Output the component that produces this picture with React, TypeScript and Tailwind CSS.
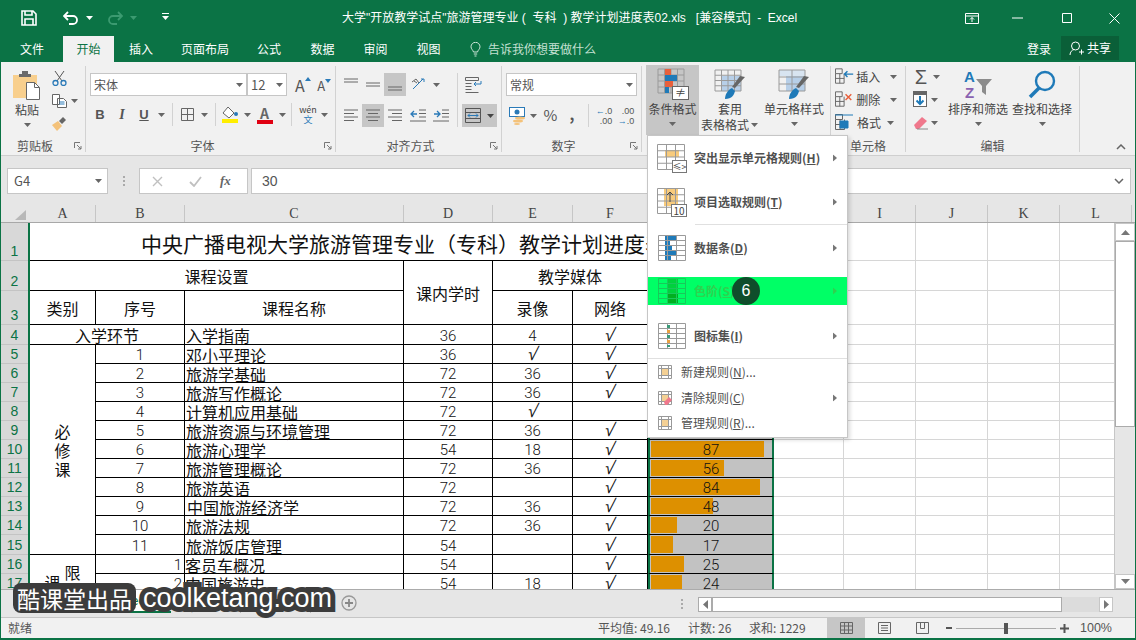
import * as React from "react";

function Caret({ w = "w-[12px]", color = "#666" }: { w?: string; color?: string }) {
  return (
    <span className={`flex shrink-0 items-center justify-center ${w}`}>
      <svg width="7" height="4" viewBox="0 0 7 4" className="shrink-0">
        <path d="M0 0h7L3.5 4z" fill={color} />
      </svg>
    </span>
  );
}

function Launcher() {
  return (
    <svg width="8" height="8" viewBox="0 0 8 8" className="absolute bottom-[2px] right-[3px]">
      <path d="M.5 6V.5H6" fill="none" stroke="#777" />
      <path d="M3 3l4 4M7 4v3H4" fill="none" stroke="#777" />
    </svg>
  );
}

function Group({ w, label, children, launcher = true }: { w: string; label: string; children: React.ReactNode; launcher?: boolean }) {
  return (
    <div className={`relative mt-1 flex h-[86px] shrink-0 flex-col border-r border-[#d2d2d2] ${w}`}>
      <div className="min-h-0 flex-1">{children}</div>
      <div className={`mb-[-1px] h-[15px] text-center text-[12px] leading-[15px] text-[#555] ${launcher ? "pr-[16px]" : ""}`}>{label}</div>
      {launcher ? <Launcher /> : null}
    </div>
  );
}

function Tool({ w = "w-[22px]", active, children }: { w?: string; active?: boolean; children: React.ReactNode }) {
  return (
    <span className={`flex h-[23px] shrink-0 items-center justify-center ${w} ${active ? "bg-[#c6c6c6]" : ""}`}>{children}</span>
  );
}

function Sep({ w }: { w: string }) {
  return (
    <span className={`flex h-[23px] shrink-0 justify-center ${w}`}>
      <span className="w-px bg-[#d2d2d2]" />
    </span>
  );
}

function Lines({ kind }: { kind: "top" | "mid" | "bottom" | "left" | "center" | "right" }) {
  const d = {
    top: "M1 2h14M1 5h14",
    mid: "M1 6h14M1 9h14",
    bottom: "M1 10h14M1 13h14",
    left: "M1 2h14M1 5.5h10M1 9h14M1 12.5h10",
    center: "M1 2h14M3 5.5h10M1 9h14M3 12.5h10",
    right: "M1 2h14M5 5.5h10M1 9h14M5 12.5h10",
  }[kind];
  return (
    <svg width="16" height="15" viewBox="0 0 16 15">
      <path d={d} stroke="#666" fill="none" />
    </svg>
  );
}

function Grid({ x = 1, y = 1, w = 28, h = 28, cols = 3, rows = 4, color = "#9a9a9a" }: { x?: number; y?: number; w?: number; h?: number; cols?: number; rows?: number; color?: string }) {
  const parts: string[] = [`M${x} ${y}h${w}v${h}h-${w}z`];
  for (let i = 1; i < cols; i++) parts.push(`M${x + (w * i) / cols} ${y}v${h}`);
  for (let i = 1; i < rows; i++) parts.push(`M${x} ${y + (h * i) / rows}h${w}`);
  return <path d={parts.join("")} fill="none" stroke={color} />;
}

function SelectBox({ w, text, small }: { w: string; text: string; small?: boolean }) {
  return (
    <div className={`flex h-[23px] shrink-0 items-center justify-between border border-[#c6c6c6] bg-white pl-[3px] ${w}`}>
      <span className={`text-[#555] ${small ? "text-[13px]" : "text-[12px]"}`}>{text}</span>
      <Caret w="w-[14px]" />
    </div>
  );
}

function TitleBar() {
  return (
    <div className="relative flex h-[36px] items-center text-white">
      <svg width="16" height="16" viewBox="0 0 16 16" className="ml-[20px]">
        <path d="M1 1h11l3 3v11H1z" fill="none" stroke="#fff" strokeWidth="1.6" />
        <path d="M4 1v4h7V1M4 15V9h8v6" fill="none" stroke="#fff" strokeWidth="1.6" />
      </svg>
      <svg width="16" height="14" viewBox="0 0 16 14" className="ml-[26px]">
        <path d="M1 5h9a4 4 0 010 8H6M5 1L1 5l4 4" fill="none" stroke="#fff" strokeWidth="1.8" />
      </svg>
      <Caret w="w-[12px] ml-[4px]" color="#fff" />
      <svg width="16" height="14" viewBox="0 0 16 14" className="ml-[12px]">
        <path d="M15 5H6a4 4 0 000 8h4M11 1l4 4-4 4" fill="none" stroke="#3b9a70" strokeWidth="1.8" />
      </svg>
      <Caret w="w-[12px] ml-[4px]" color="#3b9a70" />
      <svg width="7" height="8" viewBox="0 0 7 8" className="ml-[23px] mb-[3px]">
        <path d="M0 0h7v1H0zM0 3h7L3.5 7z" fill="#fff" />
      </svg>
      <div className="absolute left-[341px] top-[10px] whitespace-nowrap [font-family:'Liberation_Sans','Noto_Sans_CJK_SC',sans-serif] text-[12px] leading-[17px]">大学"开放教学试点"旅游管理专业&nbsp;(&nbsp; 专科&nbsp; )&nbsp;教学计划进度表02.xls&nbsp;&nbsp; [兼容模式]&nbsp; -&nbsp; Excel</div>
      <div className="ml-auto flex items-center pr-[15px]">
        <svg width="14" height="11" viewBox="0 0 14 11" className="mr-[33px]">
          <path d="M.5.5h13v10H.5zM.5 3h13M7 9V4.5M5 6.5l2-2 2 2" fill="none" stroke="#fff" />
        </svg>
        <svg width="11" height="2" viewBox="0 0 11 2" className="mr-[39px]"><path d="M0 1h11" stroke="#fff" /></svg>
        <svg width="10" height="10" viewBox="0 0 10 10" className="mr-[37px]"><path d="M.5.5h9v9h-9z" fill="none" stroke="#fff" /></svg>
        <svg width="11" height="11" viewBox="0 0 11 11"><path d="M.5.5l10 10M10.5.5l-10 10" stroke="#fff" /></svg>
      </div>
    </div>
  );
}

function TabsRow() {
  const tabs: [string, string][] = [
    ["插入", "w-[54px]"],
    ["页面布局", "w-[74px]"],
    ["公式", "w-[54px]"],
    ["数据", "w-[53px]"],
    ["审阅", "w-[53px]"],
    ["视图", "w-[53px]"],
  ];
  return (
    <div className="flex h-[26px] text-[12px] text-white">
      <span className="flex w-[62px] items-center justify-center">文件</span>
      <span className="flex w-[51px] items-center justify-center bg-[#f1f1f1] text-[#0b7345]">开始</span>
      {tabs.map(([t, w]) => (
        <span key={t} className={`flex items-center justify-center ${w}`}>{t}</span>
      ))}
      <svg width="11" height="15" viewBox="0 0 11 15" className="ml-[15px] mt-[6px]">
        <path d="M3.5 10C3 8 1 7 1 4.8a4.5 4.5 0 019 0C10 7 8 8 7.5 10zM3.8 12h3.4M4.5 14h2" fill="none" stroke="#cfe6da" />
      </svg>
      <span className="ml-[7px] flex items-center text-[#c4e0d2]">告诉我你想要做什么</span>
      <span className="ml-auto flex items-center">登录</span>
      <span className="ml-[10px] mr-[16px] flex h-[24px] w-[58px] items-center justify-center gap-[3px] bg-[#0a5f38]">
        <svg width="15" height="15" viewBox="0 0 15 15">
          <circle cx="6.5" cy="5" r="4" fill="none" stroke="#fff" />
          <path d="M1 14c0-3 2-5 4-5.5M10 11h5M12.5 8.5v5" fill="none" stroke="#fff" />
        </svg>
        共享
      </span>
    </div>
  );
}

function Clipboard() {
  return (
    <Group w="w-[85px]" label="剪贴板">
      <div className="flex">
        <div className="ml-[8px] flex w-[36px] flex-col items-center">
          <svg width="30" height="31" viewBox="0 0 30 31" className="mt-[3px]">
            <rect x="1" y="6" width="24" height="23" fill="#f8cf8d" />
            <path d="M7 5h3V2h6v3h3v3H7z" fill="#6b6b6b" />
            <path d="M14.5 13.5h8l5 5v12h-13z" fill="#fff" stroke="#666" />
            <path d="M22.5 13.5v5h5" fill="none" stroke="#666" />
          </svg>
          <span className="mt-[2px] text-[12px] leading-[16px] text-[#444]">粘贴</span>
          <Caret w="h-[14px] w-[12px]" />
        </div>
        <div className="ml-[5px] flex flex-col items-start">
          <Tool w="w-[18px]">
            <svg width="15" height="16" viewBox="0 0 15 16">
              <path d="M3 1l7 10M12 1L5 11" stroke="#555" fill="none" />
              <circle cx="3.5" cy="13" r="2.5" fill="none" stroke="#2a7ab8" strokeWidth="1.3" />
              <circle cx="11.5" cy="13" r="2.5" fill="none" stroke="#2a7ab8" strokeWidth="1.3" />
            </svg>
          </Tool>
          <div className="flex">
            <Tool w="w-[18px]">
              <svg width="15" height="14" viewBox="0 0 15 14">
                <path d="M.5.5h7v10h-7zM5.5 4.5h6l3 3v6h-9z" fill="#fff" stroke="#666" />
                <path d="M7.5 8h5M7.5 10h5" stroke="#2a7ab8" />
              </svg>
            </Tool>
            <Caret />
          </div>
          <Tool w="w-[18px]">
            <svg width="16" height="16" viewBox="0 0 16 16">
              <path d="M1 9l6-4 4 5-5 5z" fill="#f4c27a" />
              <path d="M8 5l4-4 3 3-4 4z" fill="#666" />
            </svg>
          </Tool>
        </div>
      </div>
    </Group>
  );
}

function FontGroup() {
  return (
    <Group w="w-[250px]" label="字体">
      <div className="flex pl-[4px] pt-[7px]">
        <SelectBox w="w-[157px]" text="宋体" />
        <SelectBox w="w-[40px]" text="12" small />
        <span className="relative ml-[5px] flex w-[22px] items-end justify-center text-[16px] leading-[21px] text-[#555]">
          A<svg width="6" height="4" viewBox="0 0 6 4" className="mb-[15px]"><path d="M0 4h6L3 0z" fill="#2a7ab8" /></svg>
        </span>
        <span className="flex w-[22px] items-end justify-center text-[13px] leading-[20px] text-[#555]">
          A<svg width="6" height="4" viewBox="0 0 6 4" className="mb-[13px]"><path d="M0 0h6L3 4z" fill="#2a7ab8" /></svg>
        </span>
      </div>
      <div className="mt-[7px] flex pl-[3px] text-[#555]">
        <Tool><b className="[font-family:'Liberation_Sans'] text-[13px]">B</b></Tool>
        <Tool><i className="[font-family:'Liberation_Serif'] text-[14px] font-bold">I</i></Tool>
        <Tool><u className="[font-family:'Liberation_Sans'] text-[13px] font-bold">U</u></Tool>
        <Caret />
        <Sep w="w-[11px]" />
        <Tool w="w-[18px]">
          <svg width="13" height="13" viewBox="0 0 13 13"><path d="M.5.5h12v12H.5zM6.5.5v12M.5 6.5h12" fill="none" stroke="#666" /></svg>
        </Tool>
        <Caret w="w-[16px]" />
        <Sep w="w-[6px]" />
        <Tool w="w-[25px]">
          <svg width="17" height="18" viewBox="0 0 17 18">
            <path d="M6 1l6 6-5 5-6-5z" fill="#fff" stroke="#666" />
            <circle cx="14" cy="8" r="2" fill="#2a7ab8" />
            <rect x="0" y="13" width="16" height="4" fill="#ffee00" />
          </svg>
        </Tool>
        <Caret w="w-[8px]" />
        <Tool w="w-[27px]">
          <span className="relative flex h-[18px] w-[16px] justify-center text-[14px] font-bold leading-[14px] text-[#666]">
            A<span className="absolute bottom-0 left-0 h-[4px] w-[16px] bg-[#e00012]" />
          </span>
        </Tool>
        <Caret w="w-[8px]" />
        <Sep w="w-[10px]" />
        <Tool w="w-[24px]">
          <span className="flex flex-col items-center text-[9px] leading-[10px] text-[#444]">wén<span className="text-[#2a7ab8]">文</span></span>
        </Tool>
        <Caret w="w-[8px]" />
      </div>
    </Group>
  );
}

function AlignGroup() {
  return (
    <Group w="w-[166px]" label="对齐方式">
      <div className="flex pl-[4px] pt-[7px]">
        <div className="w-[117px]">
          <div className="flex">
            <Tool><Lines kind="top" /></Tool>
            <Tool><Lines kind="mid" /></Tool>
            <Tool active><Lines kind="bottom" /></Tool>
            <Tool w="w-[26px]">
              <svg width="17" height="15" viewBox="0 0 17 15">
                <path d="M2 12L12 2M10 2h3v3" fill="none" stroke="#2a7ab8" />
                <path d="M1 5l4-3 3 4M3 4l3 2" fill="none" stroke="#666" />
              </svg>
            </Tool>
            <Caret w="w-[8px]" />
          </div>
          <div className="mt-[8px] flex">
            <Tool><Lines kind="left" /></Tool>
            <Tool active><Lines kind="center" /></Tool>
            <Tool><Lines kind="right" /></Tool>
            <Tool w="w-[24px]">
              <svg width="16" height="13" viewBox="0 0 16 13"><path d="M9 1h7M9 4.5h7M9 8h7M0 12h16" stroke="#666" fill="none" /><path d="M7 5H1M4 2L1 5l3 3" stroke="#2a7ab8" fill="none" strokeWidth="1.3" /></svg>
            </Tool>
            <Tool>
              <svg width="16" height="13" viewBox="0 0 16 13"><path d="M9 1h7M9 4.5h7M9 8h7M0 12h16" stroke="#666" fill="none" /><path d="M1 5h6M4 2l3 3-3 3" stroke="#2a7ab8" fill="none" strokeWidth="1.3" /></svg>
            </Tool>
          </div>
        </div>
        <span className="h-[54px] w-px bg-[#d2d2d2]" />
        <div className="ml-[4px] flex flex-col">
          <Tool w="w-[22px]">
            <svg width="17" height="16" viewBox="0 0 17 16"><path d="M.5.5h13v3H.5zM.5 6.5h6M.5 9.5h6M.5 12.5h6M.5 15.5h13" stroke="#666" fill="none" /><path d="M16 7H9M11 5L9 7l2 2M16 4v3" stroke="#2a7ab8" fill="none" /></svg>
          </Tool>
          <div className="mt-[8px] flex w-[35px] bg-[#c6c6c6]">
            <Tool w="w-[22px]">
              <svg width="16" height="15" viewBox="0 0 16 15"><path d="M.5.5h15v14H.5zM.5 4.5h15M.5 10.5h15" stroke="#555" fill="none" /><path d="M3 7.5h10M5 5.5l-2 2 2 2M11 5.5l2 2-2 2" stroke="#2a7ab8" fill="none" /></svg>
            </Tool>
            <Caret w="w-[13px]" color="#444" />
          </div>
        </div>
      </div>
    </Group>
  );
}

function NumberGroup() {
  return (
    <Group w="w-[140px]" label="数字">
      <div className="pl-[4px] pt-[7px]">
        <SelectBox w="w-[131px]" text="常规" />
        <div className="mt-[8px] flex items-center text-[#555]">
          <Tool>
            <svg width="17" height="18" viewBox="0 0 17 18">
              <rect x=".5" y=".5" width="15" height="9" fill="#fff" stroke="#2a7ab8" />
              <circle cx="8" cy="5" r="2.5" fill="#2a7ab8" />
              <ellipse cx="11" cy="11" rx="5" ry="1.5" fill="#f4c27a" />
              <ellipse cx="9" cy="14" rx="5" ry="1.5" fill="#f4c27a" />
              <ellipse cx="8" cy="17" rx="3" ry="1" fill="#f4c27a" />
            </svg>
          </Tool>
          <Caret w="w-[10px]" />
          <Tool w="w-[25px]"><span className="text-[15px]">%</span></Tool>
          <Tool w="w-[18px]"><span className="mb-[3px] text-[15px] font-bold">,</span></Tool>
          <Sep w="w-[14px]" />
          <Tool w="w-[18px]">
            <span className="text-right [font-family:'Liberation_Sans'] text-[9px] leading-[10px]"><span className="text-[#2a7ab8]">←</span>.0<br />.00</span>
          </Tool>
          <Tool w="w-[26px]">
            <span className="text-right [font-family:'Liberation_Sans'] text-[9px] leading-[10px]">.00<br /><span className="text-[#2a7ab8]">→</span>.0</span>
          </Tool>
        </div>
      </div>
    </Group>
  );
}

function BigButton({ w, children, lines, active, caretInline }: { w: string; children: React.ReactNode; lines: string[]; active?: boolean; caretInline?: boolean }) {
  return (
    <div className={`flex h-[70px] shrink-0 flex-col items-center ${w} ${active ? "bg-[#c6c6c6]" : ""}`}>
      <div className="flex h-[36px] w-full items-end justify-center pb-[1px]">{children}</div>
      {lines.map((l, i) => (
        <div key={l} className="flex whitespace-nowrap text-[12px] leading-[16px] text-[#444]">
          {l}
          {caretInline && i === lines.length - 1 ? <Caret w="w-[10px]" /> : null}
        </div>
      ))}
      {caretInline ? null : <Caret w="h-[14px] w-[12px]" />}
    </div>
  );
}

function StylesGroup() {
  return (
    <Group w="w-[189px]" label="样式" launcher={false}>
      <div className="-mt-px flex pl-[4px]">
        <BigButton w="w-[53px]" lines={["条件格式"]} active>
          <svg width="32" height="32" viewBox="0 0 32 32">
            <Grid x={1} y={1} w={26} h={24} cols={4} rows={4} />
            <rect x="8" y="1" width="6" height="6" fill="#e8603c" />
            <rect x="8" y="7" width="12" height="6" fill="#1f7ab8" />
            <rect x="8" y="13" width="8" height="6" fill="#e8603c" />
            <rect x="8" y="19" width="4" height="6" fill="#1f7ab8" />
            <rect x="15.5" y="18.5" width="16" height="13" fill="#fff" stroke="#666" />
            <text x="23.5" y="29" textAnchor="middle" fontSize="11" fill="#444">≠</text>
          </svg>
        </BigButton>
        <BigButton w="w-[62px]" lines={["套用", "表格格式"]} caretInline>
          <svg width="32" height="31" viewBox="0 0 32 31">
            <rect x="8" y="7" width="19" height="15" fill="#b7cfe8" />
            <Grid x={1} y={1} w={26} h={21} cols={4} rows={4} />
            <path d="M31 8L21 19l-3-1 8-11z" fill="#666" />
            <path d="M11 30c0-5 3-9 7-11l3 3c-1 4-3 8-10 8z" fill="#1f7ab8" />
          </svg>
        </BigButton>
        <BigButton w="w-[66px]" lines={["单元格样式"]}>
          <svg width="32" height="31" viewBox="0 0 32 31">
            <rect x="1" y="1" width="26" height="6" fill="#d8e4f0" />
            <rect x="8" y="7" width="19" height="15" fill="#b7cfe8" />
            <Grid x={1} y={1} w={26} h={21} cols={2} rows={3} />
            <path d="M31 8L21 19l-3-1 8-11z" fill="#666" />
            <path d="M11 30c0-5 3-9 7-11l3 3c-1 4-3 8-10 8z" fill="#1f7ab8" />
          </svg>
        </BigButton>
      </div>
    </Group>
  );
}

function CellRow({ label, accent, mini }: { label: string; accent: React.ReactNode; mini?: boolean }) {
  return (
    <div className="flex h-[23px] items-center">
      <svg width="20" height="17" viewBox="0 0 20 17" className="ml-[4px] mr-[2px]">
        <path d="M.5.5h7v5h-7zM.5 5.5v10h9v-10M.5 10.5h9M5 5.5v10" fill="none" stroke="#666" />
        {accent}
      </svg>
      <span className="w-[27px] text-[12px] text-[#444]">{label}</span>
      <Caret w={mini ? "w-[12px]" : "w-[23px]"} />
    </div>
  );
}

function CellsGroup() {
  return (
    <Group w="w-[75px]" label="单元格" launcher={false}>
      <div className="-mt-px">
        <CellRow label="插入" accent={<path d="M10 6h9M13 3L10 6l3 3" fill="none" stroke="#1f7ab8" strokeWidth="1.5" />} />
        <CellRow label="删除" accent={<path d="M11 3l6 6M17 3l-6 6" stroke="#e8603c" strokeWidth="1.5" />} />
        <CellRow label="格式" mini accent={<path d="M0 1h18M5 7h8v7H5z" stroke="#1f7ab8" fill="#1f7ab8" />} />
      </div>
    </Group>
  );
}

function EditGroup() {
  return (
    <Group w="w-[174px]" label="编辑" launcher={false}>
      <div className="-mt-px flex">
        <div className="w-[41px]">
          <div className="flex h-[23px] items-center pl-[6px]">
            <span className="w-[18px] text-center [font-family:'Liberation_Sans'] text-[20px] leading-[20px] text-[#555]">Σ</span>
            <Caret />
          </div>
          <div className="flex h-[23px] items-center pl-[7px]">
            <svg width="16" height="17" viewBox="0 0 16 17">
              <rect x=".5" y=".5" width="13" height="15" fill="#fff" stroke="#666" />
              <rect x="0" y="0" width="14" height="4" fill="#666" />
              <path d="M7 5v8M3.5 9.5L7 13l3.5-3.5" stroke="#1f7ab8" strokeWidth="2" fill="none" />
            </svg>
            <Caret w="w-[10px]" />
          </div>
          <div className="flex h-[23px] items-center pl-[7px]">
            <svg width="16" height="15" viewBox="0 0 16 15">
              <path d="M1 10l8-8 5 4-8 8H3z" fill="#f0788c" />
              <path d="M4 14h11" stroke="#888" />
            </svg>
            <Caret w="w-[10px]" />
          </div>
        </div>
        <BigButton w="w-[62px]" lines={["排序和筛选"]}>
          <svg width="32" height="32" viewBox="0 0 32 32">
            <text x="2" y="14" fontSize="15" fontWeight="700" fill="#1f7ab8" fontFamily="Liberation Sans">A</text>
            <text x="3" y="30" fontSize="15" fontWeight="700" fill="#8a62b0" fontFamily="Liberation Sans">Z</text>
            <path d="M14 11h16l-6 7v9l-4-3v-6z" fill="#8c8c8c" />
          </svg>
        </BigButton>
        <BigButton w="w-[66px]" lines={["查找和选择"]}>
          <svg width="28" height="30" viewBox="0 0 28 30">
            <circle cx="17" cy="11" r="9" fill="none" stroke="#1f7ab8" strokeWidth="2.4" />
            <path d="M11 18L2 27" stroke="#1f7ab8" strokeWidth="3.5" />
          </svg>
        </BigButton>
      </div>
    </Group>
  );
}

function Ribbon() {
  return (
    <div className="flex h-[94px] border-b border-[#cfcfcf] bg-[#f1f1f1]">
      <Clipboard />
      <FontGroup />
      <AlignGroup />
      <NumberGroup />
      <StylesGroup />
      <CellsGroup />
      <EditGroup />
      <div className="flex flex-1 items-end justify-end pb-[5px] pr-[9px]">
        <svg width="10" height="6" viewBox="0 0 10 6"><path d="M1 5l4-4 4 4" fill="none" stroke="#666" strokeWidth="1.5" /></svg>
      </div>
    </div>
  );
}

function FormulaBar() {
  return (
    <div className="flex h-[49px] bg-[#e6e6e6] pl-[6px] pt-[12px]">
      <div className="flex h-[26px] w-[101px] items-center justify-between border border-[#c6c6c6] bg-white pl-[6px] pr-[3px] text-[13px] text-[#555]">
        G4
        <Caret w="w-[12px]" />
      </div>
      <div className="flex h-[26px] w-[31px] flex-col items-center justify-center gap-[2px]">
        <span className="size-[2px] bg-[#aaa]" />
        <span className="size-[2px] bg-[#aaa]" />
        <span className="size-[2px] bg-[#aaa]" />
      </div>
      <div className="flex h-[26px] w-[109px] items-center border border-[#c6c6c6] bg-white">
        <svg width="11" height="11" viewBox="0 0 11 11" className="ml-[12px]"><path d="M1 1l9 9M10 1l-9 9" stroke="#c0c0c0" strokeWidth="1.4" /></svg>
        <svg width="13" height="11" viewBox="0 0 13 11" className="ml-[26px]"><path d="M1 6l4 4 7-9" fill="none" stroke="#c0c0c0" strokeWidth="1.8" /></svg>
        <i className="ml-[18px] [font-family:'Liberation_Serif'] text-[13px] font-bold text-[#666]">fx</i>
      </div>
      <div className="ml-[3px] flex h-[26px] w-[880px] items-center justify-between border border-[#c6c6c6] bg-white pl-[10px] pr-[6px] [font-family:'Liberation_Sans'] text-[14px] text-[#555]">
        30
        <svg width="10" height="6" viewBox="0 0 10 6"><path d="M1 1l4 4 4-4" fill="none" stroke="#666" strokeWidth="1.5" /></svg>
      </div>
    </div>
  );
}

const colHeaders: [string, string][] = [
  ["A", "w-[66px]"],
  ["B", "w-[89px]"],
  ["C", "w-[219px]"],
  ["D", "w-[89px]"],
  ["E", "w-[80px]"],
  ["F", "w-[75px]"],
  ["G", "w-[126px]"],
  ["H", "w-[70px]"],
  ["I", "w-[72px]"],
  ["J", "w-[72px]"],
  ["K", "w-[72px]"],
  ["L", "w-[72px]"],
];

function ColumnHeaders() {
  return (
    <div className="flex h-[18px] overflow-hidden border-b border-[#a8a8a8] bg-[#e6e6e6]">
      <div className="relative w-[29px] shrink-0">
        <svg width="11" height="10" viewBox="0 0 11 10" className="absolute left-[14px] top-[5px]"><path d="M11 0v10H0z" fill="#b8b8b8" /></svg>
      </div>
      {colHeaders.map(([c, w]) => (
        <div key={c} className={`flex shrink-0 items-center justify-center border-r border-[#c6c6c6] [font-family:'Liberation_Serif'] text-[14px] text-[#444] ${w}`}>{c}</div>
      ))}
    </div>
  );
}

const rowHeights: [number, string][] = [
  [1, "h-[38px]"], [2, "h-[30px]"], [3, "h-[34px]"], [4, "h-[20px]"], [5, "h-[19px]"], [6, "h-[19px]"],
  [7, "h-[19px]"], [8, "h-[19px]"], [9, "h-[19px]"], [10, "h-[19px]"], [11, "h-[19px]"], [12, "h-[19px]"],
  [13, "h-[19px]"], [14, "h-[19px]"], [15, "h-[20px]"], [16, "h-[19px]"], [17, "h-[19px]"],
];

function Cell({ className = "", align = "items-end", justify = "justify-center", children, num }: { className?: string; align?: string; justify?: string; children?: React.ReactNode; num?: boolean }) {
  return (
    <div className={`flex whitespace-nowrap border-b border-r border-black leading-[16px] text-[#111] ${align} ${justify} ${num ? "[font-family:'Roboto'] text-[15px] font-light" : "text-[16px]"} ${className}`}>
      {children}
    </div>
  );
}

function Check() {
  return <span className="mb-[1px] -skew-x-12 [font-family:'Liberation_Sans'] text-[18px] font-normal leading-[16px]">√</span>;
}

function Blanks() {
  return (
    <>
      <div className="border-b border-r border-[#d6d6d6]" />
      <div className="border-b border-r border-[#d6d6d6]" />
      <div className="border-b border-r border-[#d6d6d6]" />
      <div className="border-b border-r border-[#d6d6d6]" />
      <div className="border-b border-r border-[#d6d6d6]" />
    </>
  );
}

function Bar({ value }: { value?: number }) {
  return (
    <div className="relative flex items-end justify-center border-x-2 border-b border-[#0b7345] border-b-black bg-[#c2c2c2] [font-family:'Roboto'] text-[15px] font-light leading-[16px] text-[#111]">
      {value !== undefined ? <div className="absolute bottom-[1px] left-[1px] top-[1px] bg-[#dd9000]" style={{ width: value * 1.3 }} /> : null}
      <span className="relative">{value}</span>
    </div>
  );
}

const courses: { no: number; name: string; hours: string; video: string; net: boolean; val: number; shift?: boolean }[] = [
  { no: 1, name: "邓小平理论", hours: "36", video: "√", net: true, val: 30 },
  { no: 2, name: "旅游学基础", hours: "72", video: "36", net: true, val: 40 },
  { no: 3, name: "旅游写作概论", hours: "72", video: "36", net: true, val: 50 },
  { no: 4, name: "计算机应用基础", hours: "72", video: "√", net: false, val: 60 },
  { no: 5, name: "旅游资源与环境管理", hours: "72", video: "36", net: true, val: 68 },
  { no: 6, name: "旅游心理学", hours: "54", video: "18", net: true, val: 87 },
  { no: 7, name: "旅游管理概论", hours: "72", video: "36", net: true, val: 56 },
  { no: 8, name: "旅游英语", hours: "72", video: "", net: true, val: 84 },
  { no: 9, name: "中国旅游经济学", hours: "72", video: "36", net: true, val: 48, shift: true },
  { no: 10, name: "旅游法规", hours: "72", video: "36", net: true, val: 20 },
  { no: 11, name: "旅游饭店管理", hours: "54", video: "", net: true, val: 17 },
];

function SheetGrid() {
  return (
    <div className="grid grid-cols-[66px_89px_219px_89px_80px_75px_126px_70px_72px_72px_72px_72px] grid-rows-[38px_30px_34px_20px_19px_19px_19px_19px_19px_19px_19px_19px_19px_19px_20px_19px_19px]">
      <Cell className="col-span-7 pl-[4px] text-[21px]"><span className="mb-[3px] leading-[27px]">中央广播电视大学旅游管理专业（专科）教学计划进度表</span></Cell>
      <Blanks />

      <Cell className="col-span-3" align="items-center">课程设置</Cell>
      <Cell className="row-span-2" align="items-center">课内学时</Cell>
      <Cell className="col-span-2" align="items-center">教学媒体</Cell>
      <Bar />
      <Blanks />

      <Cell align="items-center">类别</Cell>
      <Cell align="items-center">序号</Cell>
      <Cell align="items-center">课程名称</Cell>
      <Cell align="items-center">录像</Cell>
      <Cell align="items-center">网络</Cell>
      <Bar />
      <Blanks />

      <Cell className="col-span-2" align="items-center">入学环节</Cell>
      <Cell justify="justify-start" align="items-center" className="pl-px">入学指南</Cell>
      <Cell num>36</Cell>
      <Cell num>4</Cell>
      <Cell><Check /></Cell>
      <Bar value={30} />
      <Blanks />

      {courses.map((c, i) => (
        <React.Fragment key={c.no}>
          {i === 0 ? (
            <Cell className="row-span-11 flex-col pb-[75px]" align="items-center" justify="justify-end">
              <span className="leading-[19px]">必</span>
              <span className="leading-[19px]">修</span>
              <span className="leading-[19px]">课</span>
            </Cell>
          ) : null}
          <Cell num>{c.no}</Cell>
          <Cell justify="justify-start" className={c.shift ? "pl-[2px]" : "pl-px"}>{c.name}</Cell>
          <Cell num>{c.hours}</Cell>
          <Cell num>{c.video === "√" ? <Check /> : c.video}</Cell>
          <Cell>{c.net ? <Check /> : null}</Cell>
          <Bar value={c.val} />
          <Blanks />
        </React.Fragment>
      ))}

      <Cell className="row-span-2 gap-[4px] overflow-hidden" align="items-start">
        <span className="mt-[19px]">课</span>
        <span className="mt-[9px]">限</span>
      </Cell>
      <Cell num justify="justify-end" className="pr-[2px]">1</Cell>
      <Cell justify="justify-start">客员车概况</Cell>
      <Cell num>54</Cell>
      <Cell />
      <Cell><Check /></Cell>
      <Bar value={25} />
      <Blanks />

      <Cell num justify="justify-end" className="pr-[2px]">2</Cell>
      <Cell justify="justify-start">中国旅游史</Cell>
      <Cell num>54</Cell>
      <Cell num>18</Cell>
      <Cell><Check /></Cell>
      <Bar value={24} />
      <Blanks />
    </div>
  );
}

function Sheet() {
  return (
    <div className="flex h-[366px] overflow-hidden">
      <div className="w-[29px] shrink-0 border-r-2 border-[#0b7345] bg-[#d8d8d8]">
        {rowHeights.map(([n, h]) => (
          <div key={n} className={`flex items-end justify-center border-b border-[#c4c4c4] [font-family:'Liberation_Sans'] text-[14px] leading-[17px] text-[#0b7345] ${h}`}>{n}</div>
        ))}
      </div>
      <div className="w-[1084px] shrink-0 overflow-hidden bg-white">
        <SheetGrid />
      </div>
      <div className="flex w-[21px] shrink-0 flex-col border-l border-[#c6c6c6] bg-[#e6e6e6]">
        <div className="flex h-[18px] items-center justify-center border border-[#c6c6c6] bg-white">
          <svg width="9" height="5" viewBox="0 0 9 5"><path d="M0 5h9L4.5 0z" fill="#777" /></svg>
        </div>
        <div className="h-[186px] border border-[#ababab] bg-white" />
        <div className="flex-1" />
        <div className="flex h-[15px] items-center justify-center border border-[#c6c6c6] bg-white">
          <svg width="9" height="5" viewBox="0 0 9 5"><path d="M0 0h9L4.5 5z" fill="#777" /></svg>
        </div>
      </div>
    </div>
  );
}

function SheetTabs() {
  return (
    <div className="flex h-[28px] border-t border-[#ababab] bg-[#e6e6e6]">
      <div className="ml-[100px] flex h-[23px] w-[70px] items-center justify-center border-b-2 border-[#0b7345] bg-white [font-family:'Liberation_Sans'] text-[13px] text-[#0b7345]">Sheet1</div>
      <div className="flex h-[23px] w-[70px] items-center justify-center border-r border-[#bbb] [font-family:'Liberation_Sans'] text-[13px] text-[#444]">Sheet2</div>
      <div className="flex h-[23px] w-[70px] items-center justify-center border-r border-[#bbb] [font-family:'Liberation_Sans'] text-[13px] text-[#444]">Sheet3</div>
      <svg width="16" height="16" viewBox="0 0 16 16" className="ml-[30px] mt-[5px]">
        <circle cx="8" cy="8" r="7" fill="none" stroke="#999" strokeWidth="1.3" />
        <path d="M8 4v8M4 8h8" stroke="#888" strokeWidth="1.8" />
      </svg>
      <div className="ml-[324px] mt-[9px] flex h-[10px] flex-col gap-[2px]">
        <span className="size-[2px] bg-[#aaa]" />
        <span className="size-[2px] bg-[#aaa]" />
        <span className="size-[2px] bg-[#aaa]" />
      </div>
      <div className="ml-[15px] mt-[7px] flex h-[15px] w-[415px] bg-[#dcdcdc]">
        <div className="flex w-[14px] items-center justify-center border border-[#ababab] bg-white">
          <svg width="5" height="9" viewBox="0 0 5 9"><path d="M5 0v9L0 4.5z" fill="#777" /></svg>
        </div>
        <div className="w-[350px] border border-[#ababab] bg-white" />
        <div className="flex-1" />
        <div className="flex w-[14px] items-center justify-center border border-[#c6c6c6] bg-white">
          <svg width="5" height="9" viewBox="0 0 5 9"><path d="M0 0v9l5-4.5z" fill="#777" /></svg>
        </div>
      </div>
    </div>
  );
}

function StatusBar() {
  return (
    <div className="flex h-[21px] items-center border-t border-[#c6c6c6] bg-[#f1f1f1] text-[12px] text-[#555]">
      <span className="ml-[7px]">就绪</span>
      <span className="ml-[566px] w-[90px] whitespace-nowrap">平均值: 49.16</span>
      <span className="w-[61px] whitespace-nowrap">计数: 26</span>
      <span className="w-[78px] whitespace-nowrap">求和: 1229</span>
      <span className="flex h-[21px] w-[38px] items-center justify-center bg-[#c6c6c6]">
        <svg width="13" height="12" viewBox="0 0 13 12"><path d="M.5.5h12v11H.5zM4.5.5v11M8.5.5v11M.5 4h12M.5 8h12" fill="none" stroke="#666" /></svg>
      </span>
      <span className="flex w-[38px] items-center justify-center">
        <svg width="13" height="12" viewBox="0 0 13 12"><path d="M.5.5h12v11H.5zM3 3.5h7M3 6h7M3 8.5h7" fill="none" stroke="#666" /></svg>
      </span>
      <span className="flex w-[39px] items-center justify-center">
        <svg width="13" height="12" viewBox="0 0 13 12"><path d="M.5.5h12v11H.5zM4.5.5v6h4v-6" fill="none" stroke="#666" /></svg>
      </span>
      <span className="ml-[4px] h-[2px] w-[6px] bg-[#555]" />
      <span className="relative ml-[4px] h-px w-[100px] bg-[#aaa]">
        <span className="absolute left-[48px] top-[-5px] h-[11px] w-[4px] bg-[#555]" />
      </span>
      <svg width="9" height="9" viewBox="0 0 9 9" className="ml-[4px]"><path d="M4.5 0v9M0 4.5h9" stroke="#555" strokeWidth="2" /></svg>
      <span className="ml-[11px] [font-family:'Liberation_Sans'] text-[12.5px]">100%</span>
    </div>
  );
}

function MenuRow({ h, icon, label, hot, small }: { h: string; icon: React.ReactNode; label: React.ReactNode; hot?: boolean; small?: boolean }) {
  return (
    <div className={`flex shrink-0 items-center ${h} ${hot ? "bg-[#00ff66] text-[#2fd14f]" : "text-[#505050]"}`}>
      <span className={`flex shrink-0 justify-center ${small ? "ml-[1px] w-[31px]" : "ml-[9px] w-[30px]"}`}>{icon}</span>
      <span className={`whitespace-nowrap text-[12px] ${small ? "ml-[1px]" : "ml-[7px] font-semibold"}`}>{label}</span>
    </div>
  );
}

function Arrow({ color = "#777" }: { color?: string }) {
  return (
    <svg width="4" height="7" viewBox="0 0 4 7" className="absolute right-[10px] top-1/2 -translate-y-1/2"><path d="M0 0l4 3.5L0 7z" fill={color} /></svg>
  );
}

function MiniGrid({ accent }: { accent?: React.ReactNode }) {
  return (
    <svg width="14" height="14" viewBox="0 0 14 14">
      <rect x="3" y="3" width="8" height="8" fill="#f4d094" />
      <path d="M.5.5h13v13H.5zM3.5.5v13M10.5.5v13M.5 3.5h13M.5 10.5h13" fill="none" stroke="#999" />
      {accent}
    </svg>
  );
}

function Bars({ hot }: { hot?: boolean }) {
  return (
    <svg width="28" height="26" viewBox="0 0 28 26">
      {hot ? (
        <>
          <rect x="9" y="1" width="11" height="24" fill="#00d13c" />
          <rect x="9" y="16" width="11" height="9" fill="#00b020" />
        </>
      ) : (
        <>
          <rect x="7" y="1" width="12" height="4.5" fill="#1f7ab8" />
          <rect x="7" y="6" width="5" height="4.5" fill="#1f7ab8" />
          <rect x="7" y="11" width="7" height="4.5" fill="#1f7ab8" />
          <rect x="7" y="16" width="12" height="4.5" fill="#1f7ab8" />
          <rect x="7" y="21" width="6" height="4" fill="#1f7ab8" />
        </>
      )}
      <Grid x={.5} y={.5} w={27} h={25} cols={3} rows={5} color={hot ? "#19c85a" : "#9a9a9a"} />
    </svg>
  );
}

function CondMenu() {
  const u = (s: string) => <span className="underline">{s}</span>;
  return (
    <div className="absolute left-[646px] top-[135px] w-[201px] border border-[#c6c6c6] bg-white shadow-[2px_2px_4px_rgba(0,0,0,0.15)]">
      <div className="relative">
        <MenuRow
          h="h-[44px]"
          label={<>突出显示单元格规则({u("H")})</>}
          icon={
            <svg width="30" height="29" viewBox="0 0 30 29">
              <rect x="8" y="6" width="14" height="7" fill="#f8cb7c" />
              <Grid x={.5} y={.5} w={27} h={25} cols={3} rows={4} />
              <rect x="15.5" y="16.5" width="14" height="12" fill="#fff" stroke="#777" />
              <text x="22.5" y="26" textAnchor="middle" fontSize="9" fill="#444">≤&gt;</text>
            </svg>
          }
        />
        <Arrow />
      </div>
      <div className="relative">
        <MenuRow
          h="h-[44px]"
          label={<>项目选取规则({u("T")})</>}
          icon={
            <svg width="30" height="29" viewBox="0 0 30 29">
              <rect x="7" y="1" width="14" height="17" fill="#f8cb7c" />
              <Grid x={.5} y={.5} w={27} h={25} cols={3} rows={4} />
              <path d="M13 14V4M10 7l3-3 3 3" fill="none" stroke="#444" />
              <rect x="14.5" y="16.5" width="15" height="12" fill="#fff" stroke="#777" />
              <text x="22" y="26.5" textAnchor="middle" fontSize="10" fill="#444">10</text>
            </svg>
          }
        />
        <Arrow />
      </div>
      <div className="ml-[47px] h-px bg-[#e0e0e0]" />
      <div className="relative">
        <MenuRow h="h-[45px]" label={<>数据条({u("D")})</>} icon={<Bars />} />
        <Arrow />
      </div>
      <div className="h-[7px]" />
      <div className="relative">
        <MenuRow hot h="h-[28px]" label={<>色阶({u("S")})</>} icon={<Bars hot />} />
        <Arrow color="#2fd14f" />
      </div>
      <div className="h-[9px]" />
      <div className="relative">
        <MenuRow
          h="h-[44px]"
          label={<>图标集({u("I")})</>}
          icon={
            <svg width="28" height="26" viewBox="0 0 28 26">
              <Grid x={.5} y={.5} w={27} h={25} cols={3} rows={5} />
              <rect x="9" y="2" width="3" height="3" fill="#3a9a78" />
              <rect x="9" y="7" width="3" height="3" fill="#e8a040" />
              <rect x="9" y="12" width="3" height="3" fill="#3a9a78" />
              <rect x="9" y="17" width="3" height="3" fill="#e8a040" />
              <rect x="9" y="22" width="3" height="2" fill="#3a9a78" />
            </svg>
          }
        />
        <Arrow />
      </div>
      <div className="h-px bg-[#e0e0e0]" />
      <MenuRow small h="h-[26px]" label={<>新建规则({u("N")})...</>} icon={<MiniGrid />} />
      <div className="relative">
        <MenuRow small h="h-[25px]" label={<>清除规则({u("C")})</>} icon={<MiniGrid accent={<path d="M6 11l5-5 3 3-5 5H7z" fill="#f0788c" />} />} />
        <Arrow />
      </div>
      <MenuRow small h="h-[25px]" label={<>管理规则({u("R")})...</>} icon={<MiniGrid />} />
      <div className="h-[2px]" />
    </div>
  );
}

export default function App() {
  return (
    <div className="relative h-[640px] w-[1136px] overflow-hidden border-x border-b-2 border-[#0b7345] bg-[#0b7345] [font-family:'Noto_Sans_CJK_SC','Liberation_Sans',sans-serif]">
      <TitleBar />
      <TabsRow />
      <Ribbon />
      <FormulaBar />
      <ColumnHeaders />
      <Sheet />
      <SheetTabs />
      <StatusBar />

      <CondMenu />

      <div className="absolute left-[731px] top-[277px] flex size-[28px] items-center justify-center rounded-full bg-[#0f4d2b] [font-family:'Liberation_Sans'] text-[16px] text-white">6</div>

      <div className="absolute left-[12px] top-[583px] flex items-center whitespace-nowrap text-white">
        <span className="rounded-[8px] bg-[#3c3c3c] px-[4px] text-[23px] leading-[30px]">酷课堂出品</span>
        <span className="ml-[7px] [font-family:'Liberation_Sans'] text-[27px] leading-[30px] [-webkit-text-stroke:10px_#3c3c3c] [paint-order:stroke_fill]">coolketang.com</span>
      </div>
    </div>
  );
}
